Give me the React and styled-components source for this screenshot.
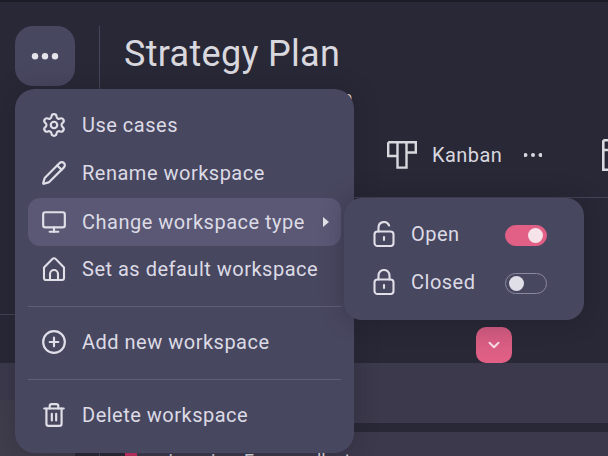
import React from "react";
import styled, { createGlobalStyle } from "styled-components";
import { Settings, Pencil, Monitor, CirclePlus, Trash2, ChevronDown } from "lucide-react";

const Global = createGlobalStyle`
  html, body { margin: 0; padding: 0; background: #292836; }
  * { box-sizing: border-box; }
  #root { width: 608px; height: 456px; overflow: hidden; }
`;

const Page = styled.div`
  position: relative;
  width: 608px;
  height: 456px;
  overflow: hidden;
  background: #292836;
  font-family: Roboto, "Liberation Sans", sans-serif;
  border-top: 2px solid #1c1b26;
`;

const Header = styled.header`
  display: flex;
  height: 196px;
  margin-left: 15px;
  padding-top: 24px;
  border-bottom: 1px solid #45435a;
`;

const MoreButton = styled.div`
  flex: none;
  width: 60px;
  height: 60px;
  border-radius: 18px;
  background: #484760;
  display: flex;
  align-items: center;
  justify-content: center;
`;

const Divider = styled.div`
  flex: none;
  width: 1px;
  height: 70px;
  margin: 0 24px;
  background: #45445a;
`;

const TitleBlock = styled.div`
  display: flex;
  flex-direction: column;
  flex: 1;
  min-width: 0;
`;

const Title = styled.h1`
  margin: 0;
  font-size: 36px;
  font-weight: 400;
  letter-spacing: 0.3px;
  line-height: 56px;
  color: #d9d8df;
  white-space: nowrap;
`;

const Views = styled.div`
  display: flex;
  align-items: center;
  height: 32px;
  margin-top: 57px;
  padding-left: 263px;
  color: #d9d8df;
  font-size: 20px;
  letter-spacing: 0.45px;
  svg { flex: none; }
`;

const ViewLabel = styled.span`
  margin-left: 15px;
  line-height: 28px;
`;

const ViewMore = styled.span`
  display: flex;
  flex: none;
  margin-left: 22px;
`;

const ViewTail = styled.span`
  display: flex;
  flex: none;
  margin-left: 60px;
`;

const Subtitle = styled.div`
  position: absolute;
  left: 124px;
  top: 85px;
  width: 228px;
  text-align: right;
  font-size: 17px;
  color: #d9d8df;
  white-space: nowrap;
`;

const Lower = styled.div`
  display: flex;
  flex-direction: column;
  align-items: flex-end;
`;

const LeftRule = styled.div`
  position: absolute;
  left: 0;
  top: 312px;
  width: 15px;
  height: 1px;
  background: #45435a;
`;

const LeftBand = styled.div`
  position: absolute;
  left: 0;
  top: 398px;
  width: 75px;
  height: 60px;
  background: #403d4c;
`;

const BottomDivider = styled.div`
  position: absolute;
  left: 99px;
  top: 440px;
  width: 1px;
  height: 20px;
  background: #45445a;
`;

const Collapse = styled.div`
  width: 36px;
  height: 36px;
  margin: 129px 96px 0 0;
  border-radius: 10px;
  background: linear-gradient(#d05a7f, #e26086);
  color: #f6dbe4;
  display: flex;
  align-items: center;
  justify-content: center;
`;

const Band = styled.div`
  width: ${p => p.$w}px;
  height: ${p => p.$h}px;
  margin-top: ${p => p.$gap || 0}px;
  background: #3c394c;
  position: relative;
`;

const BottomText = styled.span`
  position: absolute;
  left: 6px;
  top: 18px;
  font-size: 18px;
  color: #d9d8df;
  white-space: nowrap;
`;

const PinkMark = styled.span`
  position: absolute;
  left: 125px;
  top: 451px;
  width: 12px;
  height: 12px;
  background: #c2305f;
`;

const Menu = styled.div`
  position: absolute;
  left: 15px;
  top: 87px;
  width: 339px;
  height: 364px;
  border-radius: 20px;
  background: #484760;
  padding: 12px 13px 0;
  box-shadow: 0 0 24px rgba(20, 19, 30, 0.25);
  display: flex;
  flex-direction: column;
`;

const Item = styled.div`
  height: 48px;
  flex: none;
  display: flex;
  align-items: center;
  gap: 15px;
  padding: 0 13px;
  border-radius: 12px;
  font-size: 20px;
  letter-spacing: 0.5px;
  color: #dcdbe5;
  white-space: nowrap;
  background: ${p => (p.$active ? "#5a5875" : "transparent")};
  margin: ${p => (p.$active ? "1px 0 -1px" : "0")};
  svg { flex: none; }
`;

const Caret = styled.span`
  margin-left: auto;
  margin-right: -1px;
  width: 0;
  height: 0;
  border-left: 6px solid #e4e3ea;
  border-top: 5px solid transparent;
  border-bottom: 5px solid transparent;
`;

const Rule = styled.div`
  flex: none;
  height: 1px;
  margin: 13px 0 11px;
  background: #5f5d78;
`;

const Submenu = styled.div`
  position: absolute;
  left: 344px;
  top: 196px;
  width: 240px;
  height: 122px;
  padding: 12px 37px 0 29px;
  border-radius: 18px;
  background: #484760;
  box-shadow: 0 0 24px rgba(20, 19, 30, 0.3);
`;

const SubRow = styled.div`
  height: 48px;
  display: flex;
  align-items: center;
  gap: 16px;
  font-size: 20px;
  letter-spacing: 0.5px;
  color: #dcdbe5;
  svg { flex: none; }
`;

const Toggle = styled.span`
  margin-left: auto;
  margin-top: 3px;
  width: 42px;
  height: 21px;
  border-radius: 11px;
  padding: 0 3px;
  display: flex;
  align-items: center;
  justify-content: ${p => (p.$on ? "flex-end" : "flex-start")};
  background: ${p => (p.$on ? "#e26086" : "transparent")};
  border: 1px solid ${p => (p.$on ? "#e26086" : "#8a899f")};
`;

const Knob = styled.span`
  width: 15px;
  height: 15px;
  border-radius: 50%;
  background: ${p => (p.$on ? "#f6e3ea" : "#e0dfe8")};
`;

const Dots = ({ w, r, gap, color }) => (
  <svg width={w} height={r * 2 + 2} viewBox={`0 0 ${w} ${r * 2 + 2}`} fill={color}>
    {[-1, 0, 1].map(i => (
      <circle key={i} cx={w / 2 + i * gap} cy={r + 1} r={r} />
    ))}
  </svg>
);

const KanbanIcon = () => (
  <svg width="30" height="28" viewBox="0 0 30 28" fill="none" stroke="#d9d8df" strokeWidth="2.4">
    <path d="M1.2 1.2H28.8V11.5H19.5V1.2M10.5 1.2V15H1.2V1.2M10.5 1.2H19.5V26.6H10.5V15" />
  </svg>
);

const TailIcon = () => (
  <svg width="30" height="32" viewBox="0 0 30 32" fill="none" stroke="#d9d8df" strokeWidth="2.6">
    <path d="M1.3 1.3H30M1.3 1.3V30.7H30M1.3 11H30" />
  </svg>
);

const HomeIcon = () => (
  <svg width="26" height="26" viewBox="0 0 26 26" fill="none" stroke="#e0dfe8" strokeWidth="2.1" strokeLinejoin="round">
    <path d="M3 11.5 11.4 2.9a2.2 2.2 0 0 1 3.2 0L23 11.5V22a2 2 0 0 1-2 2H5a2 2 0 0 1-2-2Z" />
    <path d="M9 24v-6a4 4 0 0 1 8 0v6" />
  </svg>
);

const LockIcon = ({ open }) => (
  <svg width="22" height="26" viewBox="0 0 22 26" fill="none" stroke="#e0dfe8" strokeWidth="2.1" strokeLinecap="round" strokeLinejoin="round">
    <rect x="1.5" y="10.5" width="19" height="14.5" rx="3" />
    <path d={open ? "M5.5 10.5V6.5a5.5 5.5 0 0 1 10.6-2" : "M5.5 10.5V6.5a5.5 5.5 0 0 1 11 0v4"} />
    <path d="M11 16v3" />
  </svg>
);

const iconProps = { size: 26, strokeWidth: 2, color: "#e0dfe8" };

export default function App() {
  return (
    <Page>
      <Global />
      <Header>
        <MoreButton><Dots w={28} r={3.2} gap={10} color="#e4e3ea" /></MoreButton>
        <Divider />
        <TitleBlock>
          <Title>Strategy Plan</Title>
          <Views>
            <KanbanIcon />
            <ViewLabel>Kanban</ViewLabel>
            <ViewMore><Dots w={18} r={2} gap={7.5} color="#d9d8df" /></ViewMore>
            <ViewTail><TailIcon /></ViewTail>
          </Views>
        </TitleBlock>
      </Header>
      <Subtitle>A plan for the workspace</Subtitle>
      <Lower>
        <Collapse><ChevronDown size={18} strokeWidth={2.6} /></Collapse>
        <Band $w={608} $h={60} />
        <Band $w={471} $h={30} $gap={9}>
          <BottomText>main us in a Focus collect</BottomText>
        </Band>
      </Lower>
      <LeftRule />
      <LeftBand />
      <BottomDivider />
      <PinkMark />
      <Menu>
        <Item><Settings {...iconProps} />Use cases</Item>
        <Item><Pencil {...iconProps} />Rename workspace</Item>
        <Item $active><Monitor {...iconProps} />Change workspace type<Caret /></Item>
        <Item><HomeIcon />Set as default workspace</Item>
        <Rule />
        <Item><CirclePlus {...iconProps} />Add new workspace</Item>
        <Rule />
        <Item><Trash2 {...iconProps} />Delete workspace</Item>
      </Menu>
      <Submenu>
        <SubRow><LockIcon open />Open<Toggle $on><Knob $on /></Toggle></SubRow>
        <SubRow><LockIcon />Closed<Toggle><Knob /></Toggle></SubRow>
      </Submenu>
    </Page>
  );
}
